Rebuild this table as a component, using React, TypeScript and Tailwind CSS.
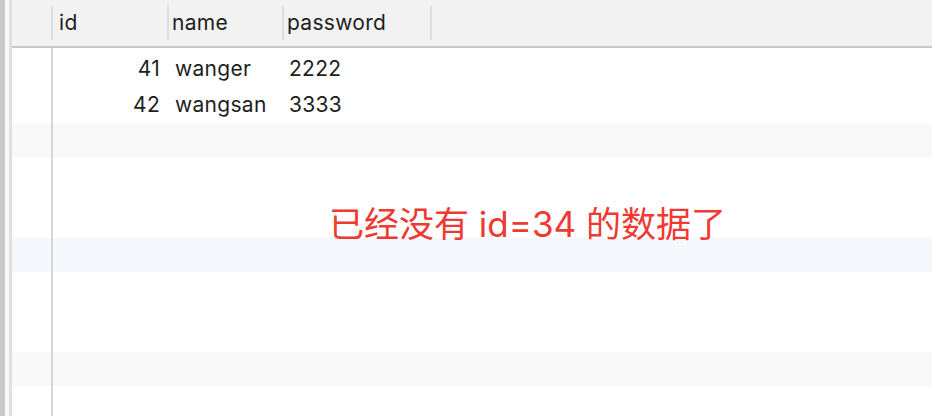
const dataRows = [
  { id: 41, name: "wanger", password: "2222" },
  { id: 42, name: "wangsan", password: "3333" },
];

// filler rows below the data: height + background
const fillers = [
  { h: "h-[1px]", bg: "bg-white" },
  { h: "h-[34px]", bg: "bg-[#f8f8f8]" },
  { h: "h-[80px]", bg: "bg-white" },
  { h: "h-[34px]", bg: "bg-[#f4f8fc]" },
  { h: "h-[80px]", bg: "bg-white" },
  { h: "h-[34px]", bg: "bg-[#f8f8f8]" },
];

const HeaderCell = ({ label, width, pad }: { label: string; width: string; pad: string }) => (
  <div className={`flex items-center h-full ${width}`}>
    <div className="w-[2px] h-[34px] bg-[#dcdcdc]" />
    <span className={pad}>{label}</span>
  </div>
);

const RowNum = () => <div className="w-[41px] shrink-0 h-full border-r-2 border-[#d6d6d6]" />;

export default function App() {
  return (
    <div
      className="relative w-[932px] h-[416px] overflow-hidden flex bg-white text-[#1e1e1e] text-[21px] tracking-[0.3px]"
      style={{ fontFamily: "Inter, 'Noto Sans CJK SC', sans-serif" }}
    >
      {/* left edge */}
      <div className="w-[5px] bg-[#c8c8c8]" />
      <div className="w-[4px] bg-[#f8f8f8]" />
      <div className="w-[3px] bg-[#e0e0e0]" />

      <div className="flex-1 flex flex-col">
        {/* header */}
        <div className="h-[48px] shrink-0 flex bg-[#f2f2f2] border-b-2 border-[#c8c8c8]">
          <div className="w-[39px] shrink-0" />
          <HeaderCell label="id" width="w-[116px]" pad="pl-[6px]" />
          <HeaderCell label="name" width="w-[115px]" pad="pl-[3px]" />
          <HeaderCell label="password" width="w-[148px]" pad="pl-[3px]" />
          <div className="flex items-center h-full">
            <div className="w-[2px] h-[34px] bg-[#dcdcdc]" />
          </div>
        </div>

        {/* body */}
        <div className="flex-1 flex flex-col">
          <div className="h-[3px] shrink-0 flex">
            <RowNum />
          </div>
          {dataRows.map((r) => (
            <div key={r.id} className="h-[36px] shrink-0 flex items-center">
              <RowNum />
              <div className="w-[114px] text-right pr-[7px]">{r.id}</div>
              <div className="w-[114px] pl-[8px]">{r.name}</div>
              <div className="pl-[8px]">{r.password}</div>
            </div>
          ))}
          {fillers.map((f, i) => (
            <div key={i} className={`${f.h} ${f.bg} flex shrink-0`}>
              <RowNum />
            </div>
          ))}
          <div className="flex-1 flex">
            <RowNum />
          </div>
        </div>
      </div>

      {/* red annotation */}
      <div className="absolute left-[329px] top-[207px] text-[35px] leading-none tracking-normal text-[#ee3a33] whitespace-nowrap">
        已经没有 id=34 的数据了
      </div>
    </div>
  );
}
